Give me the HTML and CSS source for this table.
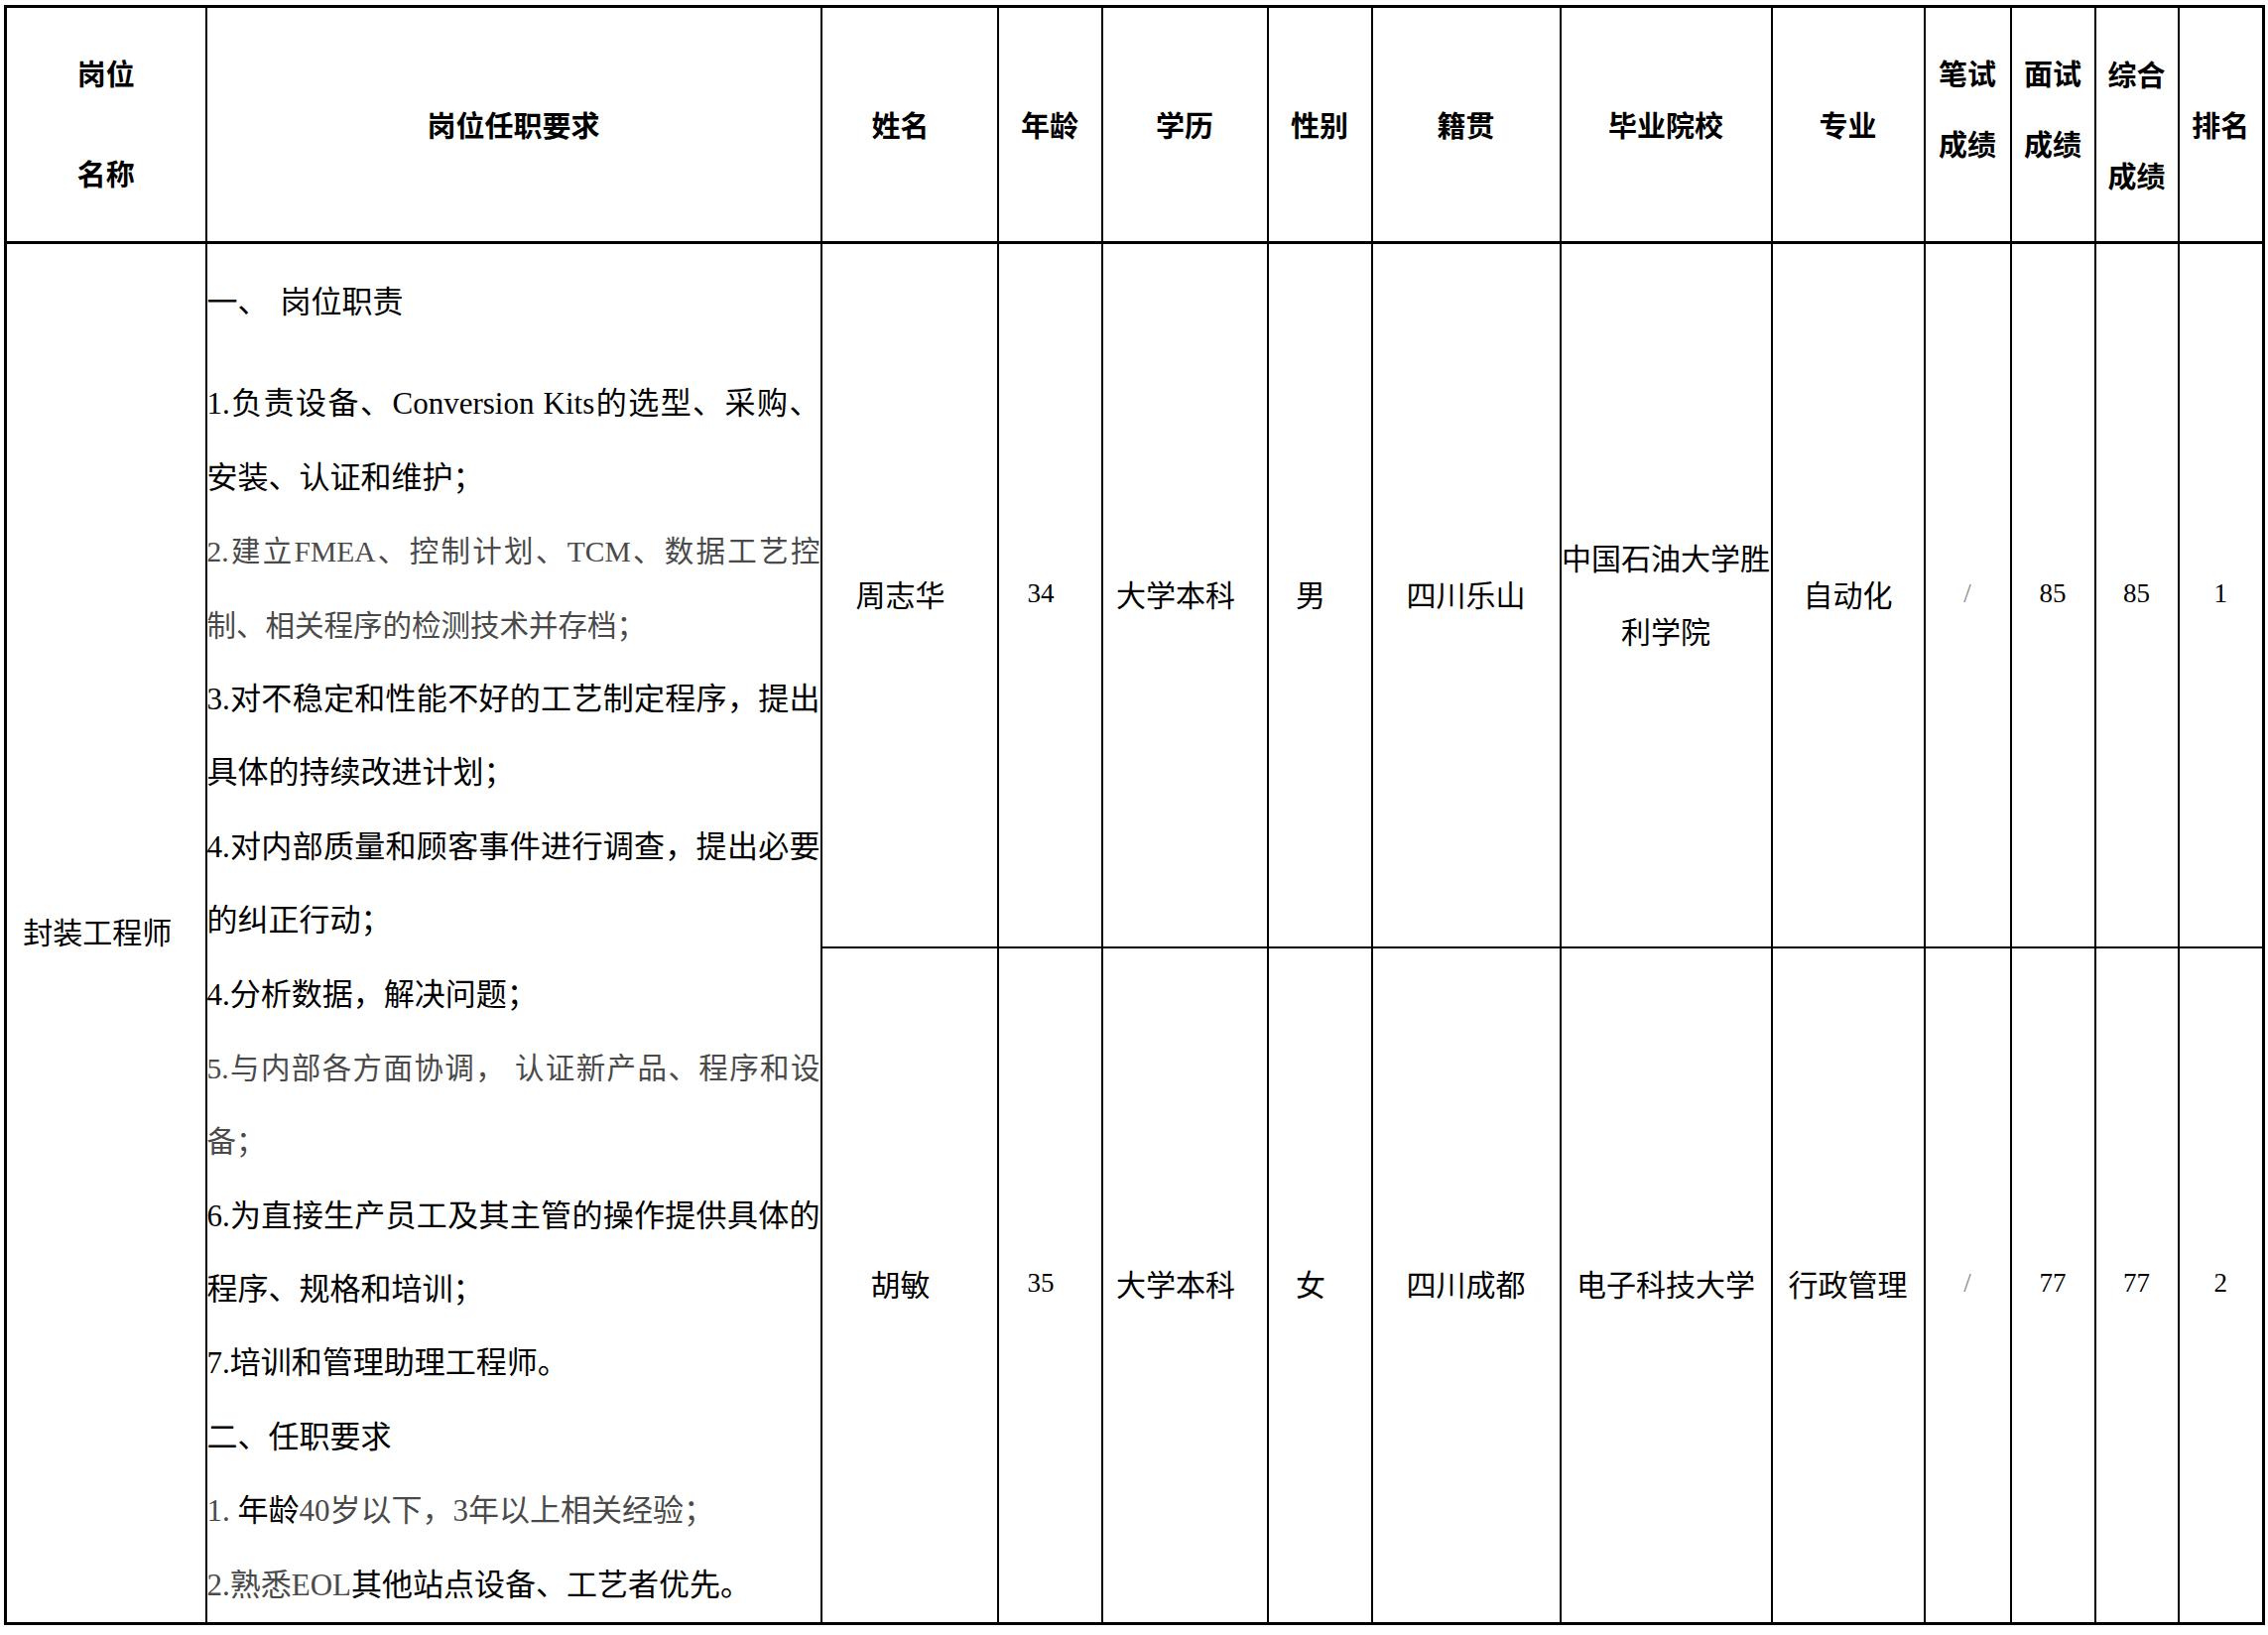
FILE: index.html
```html
<!DOCTYPE html>
<html lang="zh-CN">
<head>
<meta charset="utf-8">
<title>岗位任职要求</title>
<link rel="stylesheet" href="styles.css">
</head>
<body>
<div class="page">
<table class="t">
  <colgroup>
    <col class="c1"><col class="c2"><col class="c3"><col class="c4"><col class="c5"><col class="c6"><col class="c7"><col class="c8"><col class="c9"><col class="c10"><col class="c11"><col class="c12"><col class="c13">
  </colgroup>
  <thead>
    <tr class="hr">
      <th class="gw"><div class="l101">岗位</div><div class="l101">名称</div></th>
      <th class="hs">岗位任职要求</th>
      <th class="hs sh">姓名</th>
      <th class="hs">年龄</th>
      <th class="hs">学历</th>
      <th class="hs">性别</th>
      <th class="hs">籍贯</th>
      <th class="hs">毕业院校</th>
      <th class="hs">专业</th>
      <th class="up"><div class="l72">笔试</div><div class="l72">成绩</div></th>
      <th class="up"><div class="l72">面试</div><div class="l72">成绩</div></th>
      <th class="zh"><div class="l102">综合</div><div class="l102">成绩</div></th>
      <th class="hs">排名</th>
    </tr>
  </thead>
  <tbody>
    <tr class="r1">
      <td rowspan="2" class="post sh">封装工程师</td>
      <td rowspan="2" class="desc">
        <div class="ln first">一、<span class="gap"></span>岗位职责</div>
        <div class="ln j">1.负责设备、Conversion Kits的选型、采购、</div>
        <div class="ln">安装、认证和维护；</div>
        <div class="ln j lt sm">2.建立FMEA、控制计划、TCM、数据工艺控</div>
        <div class="ln lt sm">制、相关程序的检测技术并存档；</div>
        <div class="ln j">3.对不稳定和性能不好的工艺制定程序，提出</div>
        <div class="ln">具体的持续改进计划；</div>
        <div class="ln j">4.对内部质量和顾客事件进行调查，提出必要</div>
        <div class="ln">的纠正行动；</div>
        <div class="ln">4.分析数据，解决问题；</div>
        <div class="ln j lt sm">5.与内部各方面协调， 认证新产品、程序和设</div>
        <div class="ln lt sm">备；</div>
        <div class="ln j">6.为直接生产员工及其主管的操作提供具体的</div>
        <div class="ln">程序、规格和培训；</div>
        <div class="ln">7.培训和管理助理工程师。</div>
        <div class="ln">二、任职要求</div>
        <div class="ln"><span class="lt">1.</span> 年龄<span class="lt">40岁以下，3年以上相关经验；</span></div>
        <div class="ln"><span class="lt">2.熟悉EOL</span>其他站点设备、工艺者优先。</div>
      </td>
      <td class="d sh">周志华</td>
      <td class="d num sh">34</td>
      <td class="d sh">大学本科</td>
      <td class="d sh">男</td>
      <td class="d">四川乐山</td>
      <td class="d">中国石油大学胜<br>利学院</td>
      <td class="d">自动化</td>
      <td class="d num slash">/</td>
      <td class="d num">85</td>
      <td class="d num">85</td>
      <td class="d num">1</td>
    </tr>
    <tr class="r2">
      <td class="d sh">胡敏</td>
      <td class="d num sh">35</td>
      <td class="d sh">大学本科</td>
      <td class="d sh">女</td>
      <td class="d">四川成都</td>
      <td class="d">电子科技大学</td>
      <td class="d">行政管理</td>
      <td class="d num slash">/</td>
      <td class="d num">77</td>
      <td class="d num">77</td>
      <td class="d num">2</td>
    </tr>
  </tbody>
</table>
</div>
</body>
</html>
```

FILE: styles.css
```css
html, body {
  margin: 0;
  padding: 0;
  background: #ffffff;
}

.page {
  padding: 5px 0 0 4px;
}

.t {
  border-collapse: collapse;
  table-layout: fixed;
  width: 2278px;
  border: 3px solid #000;
  font-family: "Noto Sans CJK SC", "Liberation Sans", sans-serif;
  color: #000;
}

.c1 { width: 202px; }
.c2 { width: 620px; }
.c3 { width: 178px; }
.c4 { width: 105px; }
.c5 { width: 167px; }
.c6 { width: 105px; }
.c7 { width: 190px; }
.c8 { width: 213px; }
.c9 { width: 154px; }
.c10 { width: 87px; }
.c11 { width: 85px; }
.c12 { width: 84px; }
.c13 { width: 86px; }

th, td {
  border: 2px solid #000;
  padding: 0;
  text-align: center;
  vertical-align: middle;
}

th {
  font-weight: 700;
  font-size: 29px;
  line-height: 40px;
  border-bottom: 3px solid #000;
}

.hr { height: 238px; }
.r1 { height: 710px; }
.r2 { height: 681px; }

.hs { padding-bottom: 1px; }
.gw { padding-bottom: 3px; }
.l101 { line-height: 101px; }
.l72 { line-height: 71px; }
.l102 { line-height: 102px; }
.up { padding-bottom: 34px; }
.zh { padding-bottom: 1px; }

.sh { padding-right: 18px; }

.post {
  font-size: 30px;
  line-height: 40px;
  padding-right: 17px;
  padding-bottom: 5px;
}

.desc {
  vertical-align: top;
  text-align: left;
  padding-top: 22px;
  font-family: "Liberation Serif", "Noto Sans CJK SC", serif;
  font-size: 31px;
}

.ln {
  height: 74.4px;
  line-height: 74.4px;
  overflow: visible;
}

.first { margin-bottom: 28px; }

.gap {
  display: inline-block;
  width: 12px;
}

.j {
  text-align: justify;
  text-align-last: justify;
}

.lt { color: #4a4a4a; }

.sm { font-size: 29.5px; }

.d {
  font-size: 30px;
  line-height: 74px;
  padding-bottom: 5px;
}

.num {
  font-family: "Liberation Serif", serif;
  font-size: 27px;
}

.slash { color: #8a8a8a; }
```
